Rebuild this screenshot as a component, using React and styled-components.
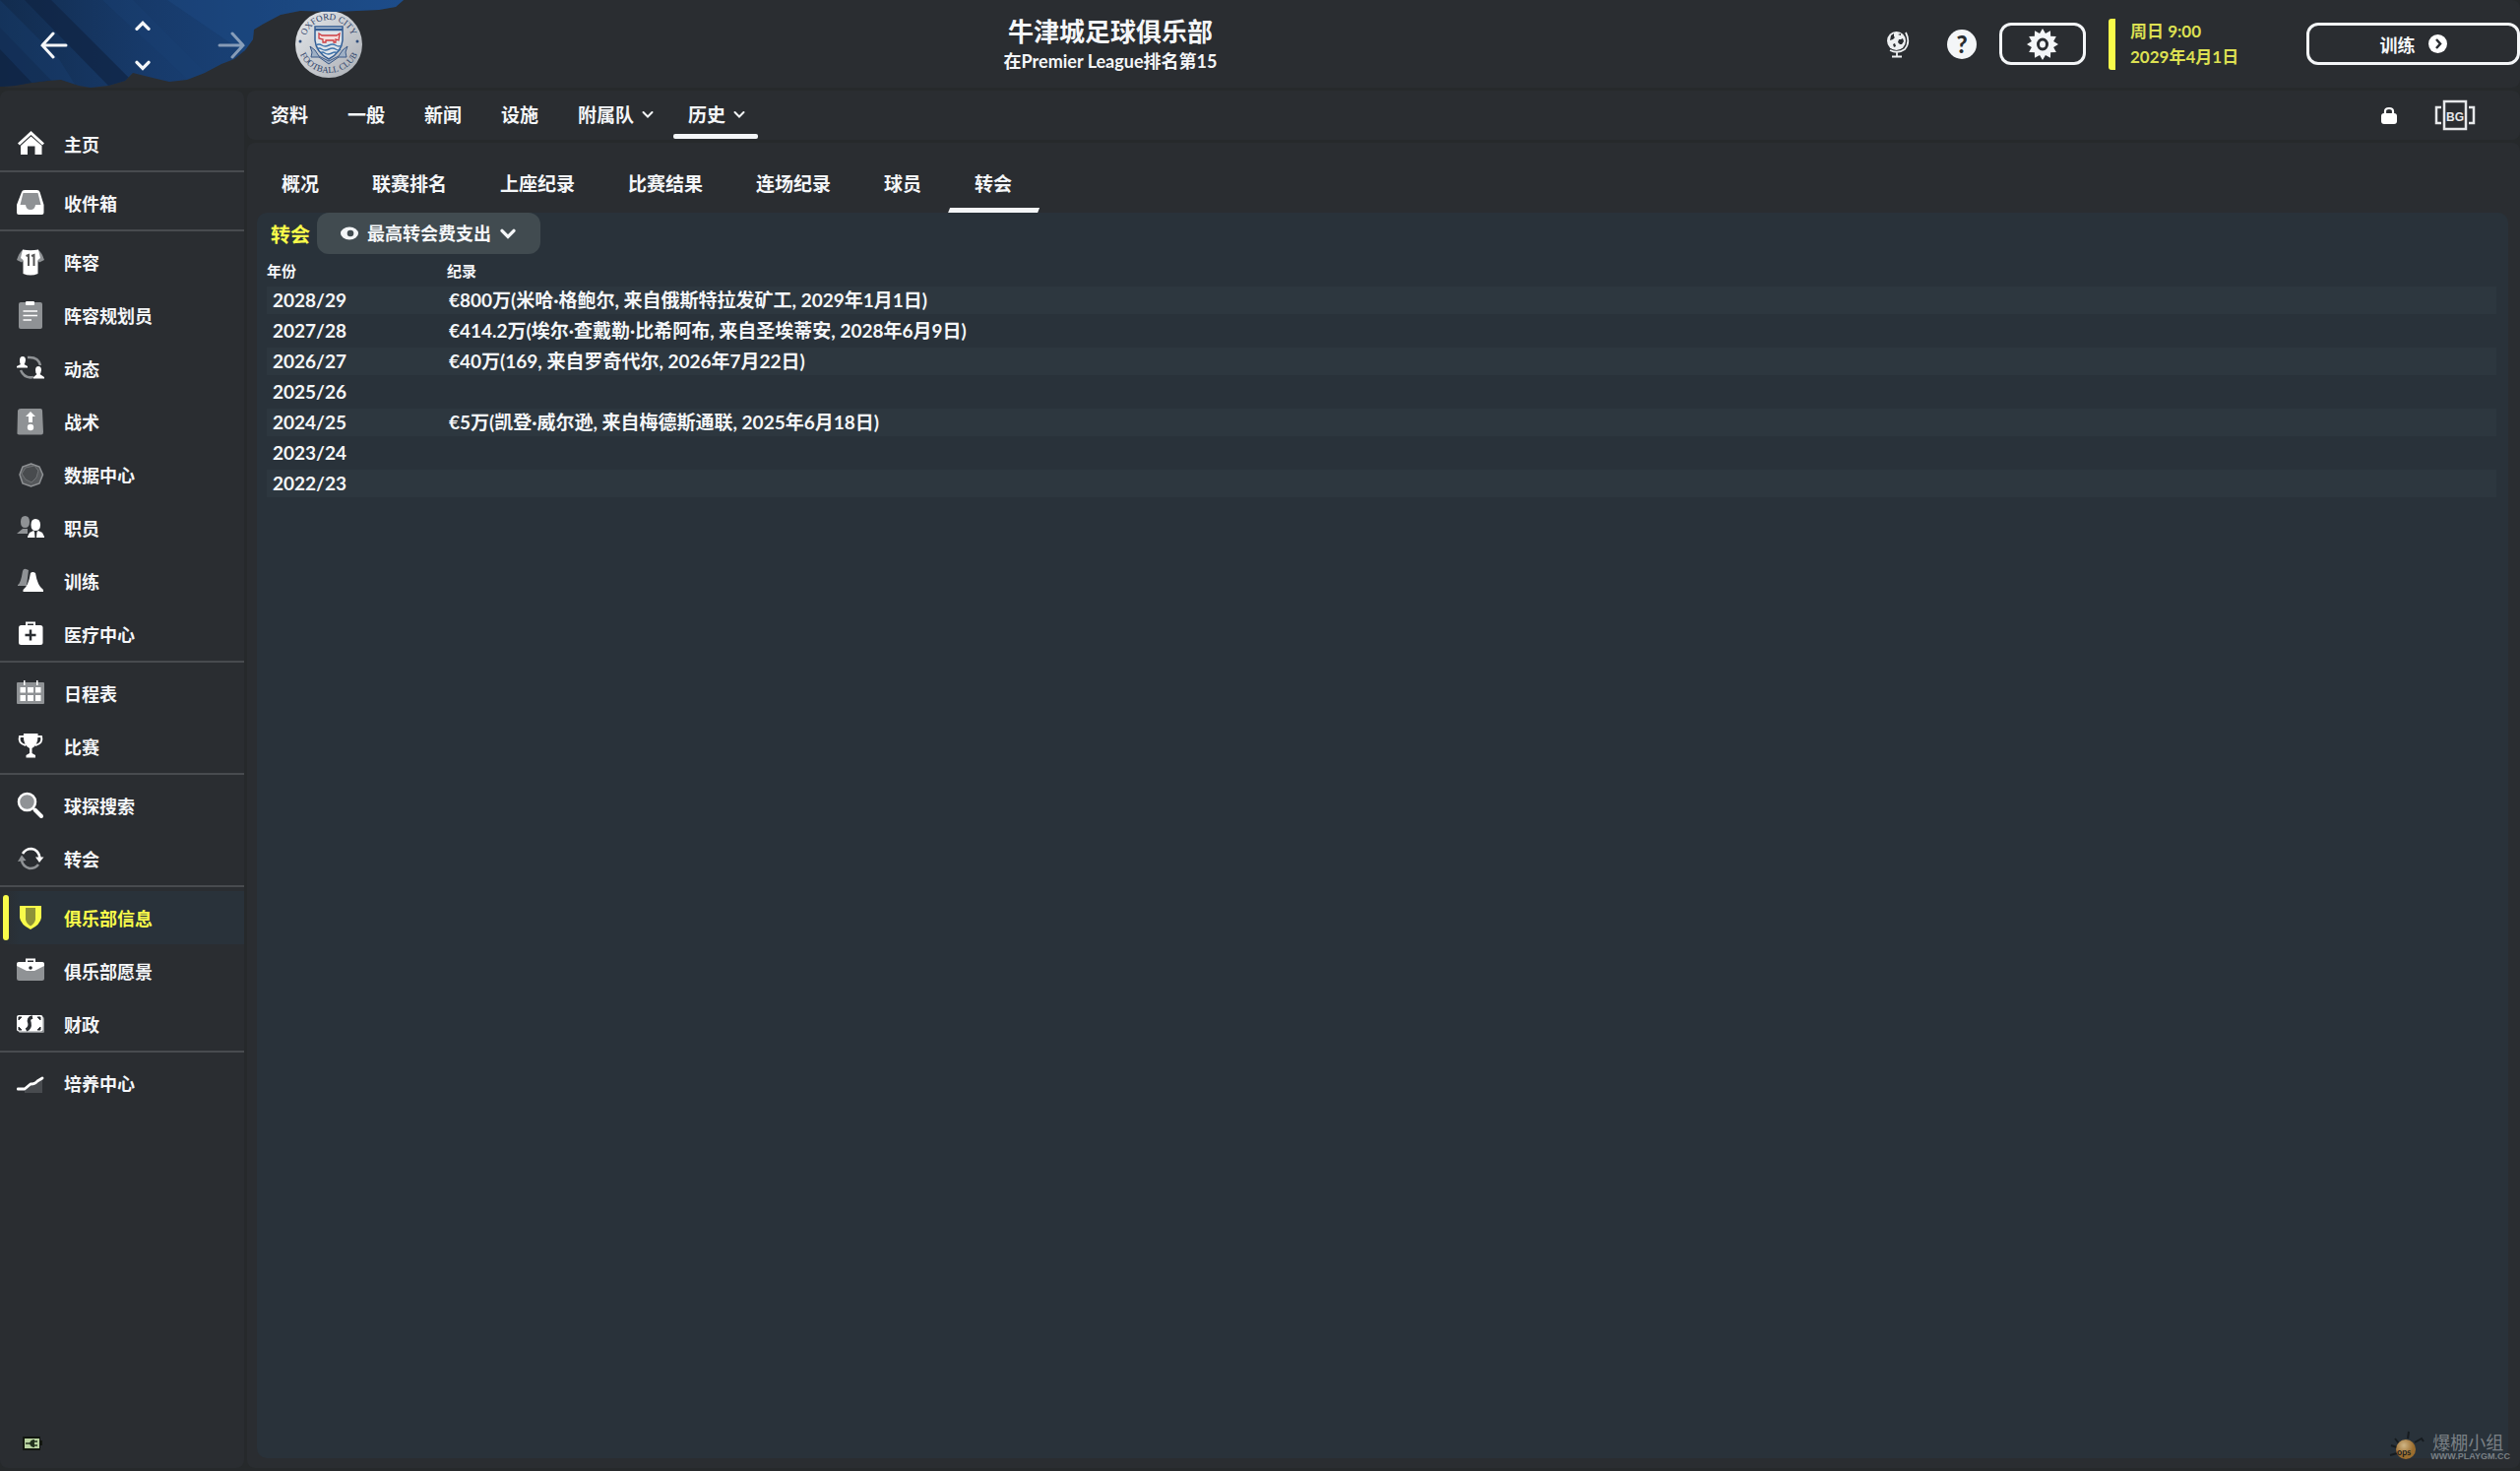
import { useState } from 'react';
import styled, { createGlobalStyle, css } from 'styled-components';

const colors = {
    page: '#26292b',
    bar: '#2a2d31',
    card: '#29323a',
    stripe: '#2d373f',
    line: '#484b4f',
    select: '#414b50',
    white: '#f4f6f8',
    grey: '#8f9295',
    yellow: '#f8fb4a',
    date: '#dde052',
};

const menuGroups = [
    [{ id: 'home', label: '主页' }],
    [{ id: 'inbox', label: '收件箱' }],
    [
        { id: 'shirt', label: '阵容' },
        { id: 'clipboard', label: '阵容规划员' },
        { id: 'dynamics', label: '动态' },
        { id: 'tactics', label: '战术' },
        { id: 'data', label: '数据中心' },
        { id: 'staff', label: '职员' },
        { id: 'training', label: '训练' },
        { id: 'medical', label: '医疗中心' },
    ],
    [
        { id: 'calendar', label: '日程表' },
        { id: 'trophy', label: '比赛' },
    ],
    [
        { id: 'search', label: '球探搜索' },
        { id: 'transfer', label: '转会' },
    ],
    [
        { id: 'shield', label: '俱乐部信息' },
        { id: 'briefcase', label: '俱乐部愿景' },
        { id: 'money', label: '财政' },
    ],
    [{ id: 'growth', label: '培养中心' }],
];

const mainTabs = [
    { label: '资料' },
    { label: '一般' },
    { label: '新闻' },
    { label: '设施' },
    { label: '附属队', menu: true },
    { label: '历史', menu: true },
];

const subTabs = [
    '概况',
    '联赛排名',
    '上座纪录',
    '比赛结果',
    '连场纪录',
    '球员',
    '转会',
];

const records = [
    {
        year: '2028/29',
        text: '€800万(米哈·格鲍尔, 来自俄斯特拉发矿工, 2029年1月1日)',
    },
    {
        year: '2027/28',
        text: '€414.2万(埃尔·查戴勒·比希阿布, 来自圣埃蒂安, 2028年6月9日)',
    },
    { year: '2026/27', text: '€40万(169, 来自罗奇代尔, 2026年7月22日)' },
    { year: '2025/26', text: '' },
    {
        year: '2024/25',
        text: '€5万(凯登·威尔逊, 来自梅德斯通联, 2025年6月18日)',
    },
    { year: '2023/24', text: '' },
    { year: '2022/23', text: '' },
];

// Sidebar icons, all on a 28x28 grid
const g = colors.grey;
const menuIcons = {
    home: (
        <>
            <path d="M1 13.5 14.500 1 28 13.500 26 15.500 14.500 5 3 15.500z" />
            <path d="M4 16 14.500 6.500 25.500 16V25H18.500V16.500H11V25H4z" />
        </>
    ),
    inbox: (
        <>
            <path d="M5 3Q5.500 1 8 1H20.500Q23 1 23.500 3L27.500 16V24Q27.500 26 25.500 26H2Q0 26 0 24V16z" />
            <path
                d="M6.500 4H21.500L24.500 16H19Q18.500 21 14 21 9.500 21 9 16H3.500z"
                fill={g}
            />
        </>
    ),
    shirt: (
        <>
            <path d="M7 1.500Q3 3 0 12L5 14.500 8 11zM21 1.500Q25 3 28 12L23 14.500 20 11z" fill={g} />
            <path d="M6 1.500Q14 3 22 1.500L24 10 21.500 12V26Q14 29 6.500 26V12L4 10z" />
            <path d="M9.500 8 12 7V18M15 8 17.500 7V18" stroke="#555" strokeWidth="2" fill="none" />
        </>
    ),
    clipboard: (
        <>
            <rect x="2" y="1" width="24" height="27" rx="2" fill={g} />
            <rect x="9" y="0" width="9" height="4" rx="1" />
            <path d="M6.500 10H21M6.500 14.500H21M6.500 19H15" stroke="#fff" strokeWidth="1.500" />
        </>
    ),
    dynamics: (
        <>
            <path d="M11 3Q22 2 24 11M17 23Q8 25 4 16" stroke={g} strokeWidth="2.500" fill="none" />
            <path d="M6 2Q9 2 9 6 8.500 9 7.500 10L11 12V13.500H0V12L4 10Q3 9 3 6 3 2 6 2zM22 12Q25 12 25 16 24.500 19 23.500 20L28 23V24.500H17V23L20.500 20Q19 19 19 16 19 12 22 12z" />
        </>
    ),
    tactics: (
        <>
            <path d="M4 1H24Q26 1 26 3L27 25Q27 27.500 25 27.500H2.500Q0 27.500 .5 25L1 3Q1.500 1 4 1z" fill={g} />
            <path d="M14 4 19 9H16V15H12V9H9z" />
            <circle cx="14" cy="20" r="3.200" />
        </>
    ),
    data: (
        <>
            <path d="M14.500 3 23 6 26.500 14 23 23 14.500 26 6 23 3 14 6 6z" fill="#55585b" stroke={g} strokeWidth="1.500" />
            <path d="M9 7 18 5 22 10 20 17 15 22 9 19 5 13z" fill="#484b4e" stroke="#707376" />
        </>
    ),
    staff: (
        <>
            <path d="M8.500 2Q13 2 13 8 13 14 8.500 14 4 14 4 8 4 2 8.500 2zM0 20 6 15H11V20z" fill={g} />
            <path d="M19 5Q24 5 24 11 24 17 19 17 14.500 17 14.500 11 14.500 5 19 5zM11 23 13 19 17 17 19 19 22 17 26 19 28 23V24H11z" />
            <path d="M18 18H20.500L20 24H18.500z" fill={colors.bar} />
        </>
    ),
    training: (
        <>
            <path d="M1 18Q4 17 6 4 7 1 9.500 2L12 3 10 19H1z" fill={g} />
            <path d="M14 6Q16 4 19 6 21 19 27 23V25H6.500V23Q12 19 14 6z" />
        </>
    ),
    medical: (
        <>
            <path d="M10 6V2.500H18V6" fill="none" stroke="#fff" strokeWidth="2" />
            <rect x="2" y="5" width="24.500" height="20" rx="2.500" />
            <path d="M14 9.500V20.500M8.500 15H19.500" stroke={colors.bar} strokeWidth="2.500" />
        </>
    ),
    calendar: (
        <>
            <rect x="0" y="3" width="28" height="22" rx="1" fill={g} />
            <path d="M3.500 8H9V13.500H3.500zM11 8H17V13.500H11zM19 8H24.500V13.500H19zM3.500 16H9V22H3.500zM11 16H17V22H11zM19 16H24.500V22H19zM7 1H8.500V6H7zM20 1H21.500V6H20z" />
        </>
    ),
    trophy: (
        <>
            <path d="M7 4H3Q1 11 9 13M21 4H25Q27 11 19 13" fill="none" stroke="#fff" strokeWidth="2" />
            <path d="M7 1H21.500Q22 13 15.500 16V21L19 23V25.500H9.500V23L13 21V16Q6 13 7 1z" />
        </>
    ),
    search: (
        <>
            <circle cx="10.500" cy="10.500" r="8.500" fill={g} stroke="#fff" strokeWidth="2.500" />
            <path d="M18.500 18.500 25 25" stroke="#fff" strokeWidth="4" strokeLinecap="round" />
        </>
    ),
    transfer: (
        <>
            <path d="M6 9Q9 4 15 4 22 5 23.500 13" fill="none" stroke="#fff" strokeWidth="2.500" />
            <path d="M19 12.500H27.500L23 18z" />
            <path d="M22 20Q19 24 13 24 6 22 5 16" fill="none" stroke={g} strokeWidth="2.500" />
            <path d="M1 17 5 10.500 9.500 16z" fill={g} />
        </>
    ),
    shield: (
        <>
            <path d="M3 2H25V14Q24 21 14 26 4 21 3 14z" fill={colors.yellow} />
            <path d="M9 4H19V16Q18 20 14 22.500 10 20 9 16z" fill="#8e9238" />
        </>
    ),
    briefcase: (
        <>
            <rect x="0" y="6" width="28" height="18" rx="2.500" fill={g} />
            <path d="M10 5V2.500H18V5" fill="none" stroke="#fff" strokeWidth="2" />
            <path d="M2 5H26Q28 5 28 7V9L18 14H10L0 9V7Q0 5 2 5z" />
            <circle cx="14" cy="11" r="1.800" fill={colors.bar} />
        </>
    ),
    money: (
        <>
            <rect x="2" y="7" width="26" height="16" rx="1.500" fill={g} />
            <rect x="0" y="5" width="26.500" height="16.500" rx="2" />
            <path d="M2 10V7H5zM24 10V7H21zM2 17V20H5zM24 17V20H21z" fill={colors.bar} stroke={colors.bar} />
            <path d="M16 7Q11 8 13 13 14 18 9.500 20" stroke={colors.bar} strokeWidth="3.500" fill="none" />
        </>
    ),
    growth: (
        <>
            <path d="M8 20 15 14 26 9V24H8z" fill={g} opacity=".3" />
            <path d="M1 20H8L14 15Q19 15 21 12L26 9" fill="none" stroke="#fff" strokeWidth="2.800" strokeLinecap="round" strokeLinejoin="round" />
        </>
    ),
};

const Chevron = ({ size = 12, up, width = 2 }) => (
    <svg width={size} height={size} viewBox="0 0 12 12" aria-hidden="true">
        <path
            d={up ? 'M1.500 8.500 6 4 10.500 8.500' : 'M1.500 4 6 8.500 10.500 4'}
            fill="none"
            stroke="currentColor"
            strokeWidth={width}
            strokeLinecap="round"
        />
    </svg>
);

const Arrow = ({ right }) => (
    <svg width="28" height="28" viewBox="0 0 28 28" aria-hidden="true">
        <path
            d={right ? 'M2 14H26M15 2 26 14 15 26' : 'M26 14H2M13 2 2 14 13 26'}
            fill="none"
            stroke="currentColor"
            strokeWidth="3"
            strokeLinecap="round"
        />
    </svg>
);

const Paint = () => (
    <PaintSvg viewBox="0 0 420 92" aria-hidden="true">
        <defs>
            <linearGradient id="paint" x1="0" x2="1">
                <stop offset="0" stopColor="#122c4e" />
                <stop offset=".35" stopColor="#173a6a" />
                <stop offset="1" stopColor="#1c4b88" />
            </linearGradient>
            <clipPath id="splash">
                <path d="M0 0H410L402 7 385 10 340 12 305 11 285 15 268 24 258 30 257 40 249 51 238 60 225 65 208 74 190 81 172 83 155 79 135 74 127 82 110 87 92 89 80 87 62 81 48 82 32 84 15 87 0 88z" />
            </clipPath>
        </defs>
        <g clipPath="url(#splash)">
            <path d="M0 0H420V92H0z" fill="url(#paint)" />
            <path d="M25 0 52 0 144 92H115zM0 28 62 92H0z" fill="#0f2443" opacity=".7" />
            <path d="M104 0H135L215 80H190zM0 0 60 60 80 92 40 92 0 50z" fill="#1a4175" opacity=".35" />
            <path d="M170 0H420V20L258 60z" fill="#1f5395" opacity=".25" />
        </g>
    </PaintSvg>
);

const Crest = () => (
    <svg width="70" height="70" viewBox="0 0 70 70" role="img" aria-label="Oxford City">
        <defs>
            <linearGradient id="silver" x1="0" y1="0" x2="1" y2="1">
                <stop offset="0" stopColor="#e4e7ea" />
                <stop offset=".5" stopColor="#c9ccd1" />
                <stop offset="1" stopColor="#a9adb3" />
            </linearGradient>
            <path id="crestTop" d="M10 35A25 25 0 0 1 60 35" />
            <path id="crestBottom" d="M3 32A32 32 0 0 0 67 32" />
        </defs>
        <circle cx="35" cy="35" r="34" fill="url(#silver)" />
        <CrestText>
            <textPath href="#crestTop" startOffset="50%" textAnchor="middle">
                OXFORD CITY
            </textPath>
        </CrestText>
        <CrestText>
            <textPath href="#crestBottom" startOffset="50%" textAnchor="middle">
                FOOTBALL CLUB
            </textPath>
        </CrestText>
        <circle cx="6" cy="32" r="1.500" fill="#2f4d7c" />
        <circle cx="64" cy="32" r="1.500" fill="#2f4d7c" />
        <path d="M21 17H49V31Q48 43 35 50 22 43 21 31z" fill="#dfe4ea" stroke="#335c92" strokeWidth="1.500" />
        <path d="M21 20H49" stroke="#335c92" strokeWidth="2.500" />
        <path d="M25 24 28 26H43L46 24 45 31 42 30V33H40V31H32V33H29V30L25 29z" fill="#f4dddd" stroke="#ce3d42" strokeWidth="1.300" />
        <path d="M22 36Q25 34 28 36T35 36 42 36 48 36M23 40Q25 38 28 40T35 40 42 40 47 40M27 44Q28 42 31 44T38 44 43 44" fill="none" stroke="#3e73ab" strokeWidth="1.500" />
        <path d="M16 37 21 41 25 47 35 52 45 47 49 41 54 37 52 43 53 48 45 48 35 55 25 48 17 48 18 43z" fill="#9fb0c5" stroke="#3b5986" strokeWidth="1" />
    </svg>
);

const GearIcon = () => {
    const points = Array.from({ length: 24 }, (_, i) => {
        const r = i % 2 ? 11.5 : 16;
        const a = (i * Math.PI) / 12;
        return `${16 + r * Math.sin(a)},${16 - r * Math.cos(a)}`;
    }).join(' ');
    return (
        <svg width="32" height="32" viewBox="0 0 32 32" aria-hidden="true">
            <polygon points={points} fill="#f4f6f8" />
            <ellipse cx="16" cy="16" rx="4.500" ry="5" fill="none" stroke={colors.bar} strokeWidth="3" />
        </svg>
    );
};

const GlobeIcon = () => (
    <svg width="24" height="28" viewBox="0 0 24 28" aria-hidden="true">
        <circle cx="10.500" cy="10.500" r="9.500" fill="#eef0f2" />
        <path d="M5 5 8 3 8 6 9 7 7 9 4 10zM13 9 15 9 17 8 18 11 16 14 14 14 12 12zM7 14 9 13 10 16 8 17zM12 4 15 3 15 5z" fill={colors.bar} />
        <path d="M20 2Q25 12 19 19 12 24 4 20M11 22V26M6 26.500H16" fill="none" stroke="#eef0f2" strokeWidth="1.800" />
    </svg>
);

const Watermark = () => (
    <WatermarkBox>
        <svg width="44" height="34" viewBox="0 0 44 34" aria-hidden="true">
            <defs>
                <radialGradient id="ball" cx=".4" cy=".3">
                    <stop offset="0" stopColor="#e2c48e" />
                    <stop offset="1" stopColor="#a8742e" />
                </radialGradient>
            </defs>
            <path d="M8 9 12 14M22 2 21 9M4 16 10 18M28 13 35 9 37 12M10 24 3 26" stroke="#15191d" strokeWidth="2" fill="none" />
            <circle cx="19" cy="20" r="10" fill="url(#ball)" />
            <text x="10" y="26" fontSize="9" fontWeight="bold" fontFamily="Lato, sans-serif" fill="#1c1c1c">
                ops
            </text>
        </svg>
        <div>
            <WatermarkName>爆棚小组</WatermarkName>
            <WatermarkUrl>WWW.PLAYGM.CC</WatermarkUrl>
        </div>
    </WatermarkBox>
);

function App() {
    const [active, setActive] = useState('shield');
    const [tab, setTab] = useState('历史');
    const [subTab, setSubTab] = useState('转会');

    return (
        <Page>
            <GlobalStyle />
            <Header>
                <Paint />
                <NavButtons>
                    <IconButton aria-label="后退">
                        <Arrow />
                    </IconButton>
                    <UpDown>
                        <IconButton aria-label="上一个">
                            <Chevron size={16} width={2.5} up />
                        </IconButton>
                        <IconButton aria-label="下一个">
                            <Chevron size={16} width={2.5} />
                        </IconButton>
                    </UpDown>
                    <IconButton aria-label="前进" $faded>
                        <Arrow right />
                    </IconButton>
                </NavButtons>
                <Crest />
                <Titles>
                    <h1>牛津城足球俱乐部</h1>
                    <p>在Premier League排名第15</p>
                </Titles>
                <Tools>
                    <IconButton aria-label="世界">
                        <GlobeIcon />
                    </IconButton>
                    <HelpButton aria-label="帮助">?</HelpButton>
                    <OutlineButton $width={88} aria-label="设置">
                        <GearIcon />
                    </OutlineButton>
                    <DateBox>
                        <span>周日 9:00</span>
                        <span>2029年4月1日</span>
                    </DateBox>
                    <OutlineButton $width={217}>
                        训练
                        <svg width="19" height="19" viewBox="0 0 19 19" aria-hidden="true">
                            <circle cx="9.500" cy="9.500" r="9.500" fill="#fff" />
                            <path d="M8 5 12 9.500 8 14" fill="none" stroke={colors.bar} strokeWidth="2.500" />
                        </svg>
                    </OutlineButton>
                </Tools>
            </Header>
            <Body>
                <Sidebar>
                    {menuGroups.map((group) => (
                        <MenuGroup key={group[0].id}>
                            {group.map(({ id, label }) => (
                                <li key={id}>
                                    <MenuLink
                                        href={`#${id}`}
                                        $active={id === active}
                                        onClick={() => setActive(id)}
                                    >
                                        <svg width="28" height="28" viewBox="0 0 28 28" fill="#fff" aria-hidden="true">
                                            {menuIcons[id]}
                                        </svg>
                                        {label}
                                    </MenuLink>
                                </li>
                            ))}
                        </MenuGroup>
                    ))}
                    <Power width="20" height="14" viewBox="0 0 20 14" aria-hidden="true">
                        <path d="M0 0H18V4H20V9H18V14H0z" fill="#12160f" />
                        <rect x="2" y="2" width="15" height="10" fill="#b9d3a0" />
                        <path d="M3 7H8M12 5H15M12 9H15" stroke="#20301c" strokeWidth="1.500" />
                        <path d="M12 3V11Q8 11 7 7 8 3 12 3z" fill="#20301c" />
                    </Power>
                </Sidebar>
                <Main>
                    <TopNav>
                        {mainTabs.map(({ label, menu }) => (
                            <MainTab
                                key={label}
                                $menu={menu}
                                $active={label === tab}
                                onClick={() => setTab(label)}
                            >
                                {label}
                                {menu && <Chevron />}
                            </MainTab>
                        ))}
                        <TopNavIcons>
                            <svg width="16" height="18" viewBox="0 0 16 18" aria-hidden="true">
                                <rect x="0" y="7" width="16" height="11" rx="3" fill="#fff" />
                                <path d="M4 8V5Q4 2 8 2 12 2 12 5V8" fill="none" stroke="#fff" strokeWidth="2.200" />
                            </svg>
                            <svg width="42" height="32" viewBox="0 0 42 32" role="img" aria-label="BG">
                                <path d="M7 8H2V24H7M35 8H40V24H35" fill="none" stroke="#e6e8ea" strokeWidth="2.500" />
                                <rect x="10" y="2" width="22" height="28" fill="none" stroke="#e6e8ea" strokeWidth="2.500" />
                                <BadgeText x="21" y="22" textAnchor="middle">
                                    BG
                                </BadgeText>
                            </svg>
                        </TopNavIcons>
                    </TopNav>
                    <Content>
                        <SubNav>
                            {subTabs.map((label) => (
                                <SubTab
                                    key={label}
                                    $active={label === subTab}
                                    onClick={() => setSubTab(label)}
                                >
                                    {label}
                                </SubTab>
                            ))}
                        </SubNav>
                        <Card>
                            <CardHead>
                                <h2>转会</h2>
                                <SelectBox>
                                    <svg width="18" height="14" viewBox="0 0 18 14" aria-hidden="true">
                                        <ellipse cx="9" cy="7" rx="9" ry="6.500" fill="#f4f6f8" />
                                        <circle cx="10" cy="7" r="3.300" fill={colors.select} />
                                    </svg>
                                    <select aria-label="纪录类型">
                                        <option>最高转会费支出</option>
                                        <option>最高转会费收入</option>
                                    </select>
                                    <Chevron size={16} width={2.5} />
                                </SelectBox>
                            </CardHead>
                            <Table>
                                <thead>
                                    <tr>
                                        <th>年份</th>
                                        <th>纪录</th>
                                    </tr>
                                </thead>
                                <tbody>
                                    {records.map(({ year, text }) => (
                                        <tr key={year}>
                                            <td>{year}</td>
                                            <td>{text}</td>
                                        </tr>
                                    ))}
                                </tbody>
                            </Table>
                        </Card>
                    </Content>
                </Main>
            </Body>
            <Watermark />
        </Page>
    );
}

export default App;

const GlobalStyle = createGlobalStyle`
    * {
        box-sizing: border-box;
    }
    body {
        margin: 0;
        background: ${colors.page};
        color: ${colors.white};
        font-family: Lato, 'Noto Sans CJK SC', sans-serif;
        font-weight: 700;
        font-size: 18px;
    }
    h1, h2, p, ul {
        margin: 0;
        padding: 0;
    }
    button, select {
        font: inherit;
        color: inherit;
        background: none;
        border: none;
        padding: 0;
        cursor: pointer;
    }
    svg {
        display: block;
        flex: none;
    }
`;

const Page = styled.div`
    position: relative;
    display: flex;
    flex-direction: column;
    min-height: 100vh;
    padding-bottom: 3px;
`;

const Header = styled.header`
    position: relative;
    display: grid;
    grid-template-columns: 299px 70px 1fr auto;
    align-items: center;
    height: 89px;
    background: ${colors.bar};
    border-radius: 8px;
`;

const PaintSvg = styled.svg`
    position: absolute;
    top: 0;
    left: 0;
    width: 420px;
`;

const NavButtons = styled.div`
    position: relative;
    display: flex;
    align-items: center;
    justify-content: space-between;
    padding: 3px 50px 0 41px;
`;

const UpDown = styled.div`
    display: flex;
    flex-direction: column;
    gap: 24px;
`;

const IconButton = styled.button`
    opacity: ${({ $faded }) => ($faded ? 0.5 : 1)};
`;

const CrestText = styled.text`
    font-family: 'Liberation Serif', serif;
    font-size: 9px;
    font-weight: 400;
    fill: #2f4368;
`;

const Titles = styled.div`
    padding-right: 29px;
    text-align: center;
    h1 {
        font-size: 26px;
        line-height: 34px;
    }
    p {
        font-size: 18px;
        line-height: 26px;
    }
`;

const Tools = styled.div`
    display: flex;
    align-items: center;
    height: 89px;
    gap: 23px;
`;

const HelpButton = styled.button`
    width: 30px;
    height: 30px;
    margin-left: 15px;
    border-radius: 50%;
    background: ${colors.white};
    color: ${colors.bar};
    font-size: 24px;
    font-weight: 900;
    line-height: 30px;
`;

const OutlineButton = styled.button`
    display: flex;
    align-items: center;
    justify-content: center;
    gap: 13px;
    width: ${({ $width }) => $width}px;
    height: 43px;
    border: 3px solid ${colors.white};
    border-radius: 12px;
`;

const DateBox = styled.div`
    display: flex;
    flex-direction: column;
    width: 178px;
    padding-left: 15px;
    border-left: 7px solid ${colors.yellow};
    border-radius: 3px;
    color: ${colors.date};
    font-size: 17px;
    line-height: 26px;
`;

const Body = styled.div`
    display: flex;
    flex: 1;
    gap: 3px;
    padding-top: 3px;
`;

const Sidebar = styled.nav`
    display: flex;
    flex-direction: column;
    width: 248px;
    padding: 27px 0 18px;
    background: ${colors.bar};
    border-radius: 8px;
`;

const MenuGroup = styled.ul`
    list-style: none;
    & + & {
        border-top: 2px solid ${colors.line};
        padding-top: 4px;
    }
`;

const activeLink = css`
    color: ${colors.yellow};
    background: linear-gradient(90deg, transparent, ${colors.card} 20px);
    &::before {
        content: '';
        position: absolute;
        left: 3px;
        top: 4px;
        bottom: 4px;
        width: 6px;
        border-radius: 3px;
        background: ${colors.yellow};
    }
`;

const MenuLink = styled.a`
    position: relative;
    display: flex;
    align-items: center;
    gap: 20px;
    height: 54px;
    padding-left: 17px;
    color: ${colors.white};
    text-decoration: none;
    ${({ $active }) => $active && activeLink}
`;

const Power = styled.svg`
    margin: auto 0 0 23px;
`;

const Main = styled.main`
    display: flex;
    flex-direction: column;
    flex: 1;
    gap: 3px;
`;

const TopNav = styled.nav`
    display: flex;
    align-items: stretch;
    gap: 4px;
    height: 50px;
    padding-left: 6px;
    background: ${colors.bar};
    border-radius: 8px;
    font-size: 19px;
`;

const underline = css`
    &::after {
        content: '';
        position: absolute;
        height: 5px;
        background: ${colors.white};
    }
`;

const MainTab = styled.button`
    position: relative;
    display: flex;
    align-items: center;
    gap: 8px;
    padding: 0 ${({ $menu }) => ($menu ? 13 : 18)}px 3px 18px;
    ${({ $active }) => $active && underline}
    &::after {
        left: 3px;
        right: 0;
        bottom: 1px;
        border-radius: 2px;
    }
`;

const TopNavIcons = styled.div`
    display: flex;
    align-items: center;
    gap: 38px;
    margin-left: auto;
    padding: 0 45px 0 0;
`;

const BadgeText = styled.text`
    font-family: 'Liberation Sans Narrow', 'Liberation Sans', sans-serif;
    font-size: 12px;
    font-weight: 700;
    fill: #e6e8ea;
`;

const Content = styled.section`
    display: flex;
    flex-direction: column;
    flex: 1;
    padding: 0 12px 10px 10px;
    background: ${colors.bar};
    border-radius: 8px;
`;

const SubNav = styled.nav`
    display: flex;
    height: 71px;
    margin-left: -2px;
    font-size: 19px;
`;

const SubTab = styled.button`
    position: relative;
    padding: 9px 27px 0;
    ${({ $active }) => $active && underline}
    &::after {
        left: 0;
        right: -1px;
        bottom: 0;
        clip-path: polygon(2px 0, 100% 0, calc(100% - 2px) 100%, 0 100%);
    }
`;

const Card = styled.div`
    flex: 1;
    padding: 0 12px 0 10px;
    background: ${colors.card};
    border-radius: 10px;
`;

const CardHead = styled.div`
    display: flex;
    align-items: center;
    gap: 7px;
    padding-left: 4px;
    h2 {
        font-size: 20px;
        color: ${colors.yellow};
    }
`;

const SelectBox = styled.label`
    display: flex;
    align-items: center;
    gap: 9px;
    height: 42px;
    padding: 0 25px 0 24px;
    border-radius: 12px;
    background: ${colors.select};
    select {
        appearance: none;
        outline: none;
    }
`;

const Table = styled.table`
    width: 100%;
    table-layout: fixed;
    border-spacing: 0 3px;
    text-align: left;
    th {
        height: 27px;
        padding: 0;
        font-size: 15px;
        font-weight: 700;
    }
    th:first-child {
        width: 183px;
    }
    td {
        height: 28px;
        padding: 0 0 1px 2px;
        font-size: 19px;
        line-height: 27px;
    }
    td:first-child {
        padding-left: 6px;
    }
    tbody tr:nth-child(odd) {
        background: ${colors.stripe};
    }
`;

const WatermarkBox = styled.div`
    position: absolute;
    right: 10px;
    bottom: 8px;
    display: flex;
    align-items: center;
    opacity: 0.9;
    color: #83898e;
`;

const WatermarkName = styled.div`
    padding-left: 2px;
    font-family: 'Noto Sans CJK SC', sans-serif;
    font-size: 18px;
    font-weight: 400;
    line-height: 20px;
`;

const WatermarkUrl = styled.div`
    font-family: 'Liberation Sans', sans-serif;
    font-size: 9px;
    line-height: 10px;
`;
